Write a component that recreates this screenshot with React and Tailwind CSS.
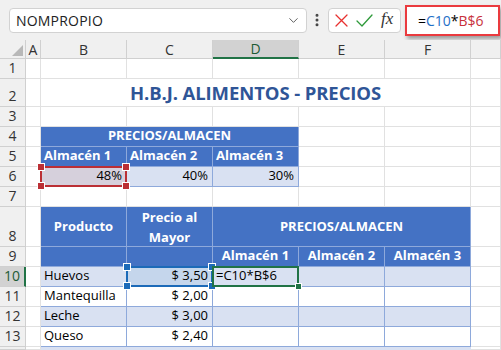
import { ChevronDown, EllipsisVertical } from 'lucide-react';

const COL = ['', 'col-start-1', 'col-start-2', 'col-start-3', 'col-start-4', 'col-start-5', 'col-start-6', 'col-start-7', 'col-start-8'];
const ROW = ['row-start-1', 'row-start-2', 'row-start-3', 'row-start-4', 'row-start-5', 'row-start-6', 'row-start-7', 'row-start-8', 'row-start-9', 'row-start-10', 'row-start-11', 'row-start-12', 'row-start-13', 'row-start-14', 'row-start-15'];
const SPAN = { 1: '', 3: 'col-span-3', 5: 'col-span-5' };

const BLUE = 'bg-[#4472c4] text-white font-bold border-r border-b border-[#8ea9db]';
const BAND = 'bg-[#d9e1f2] border-r border-b border-[#8ea9db]';
const PLAIN = 'bg-white border-r border-b border-[#8ea9db]';

const Cell = ({ r, c, span = 1, className = '', children }) => (
  <div className={`${ROW[r]} ${COL[c]} ${SPAN[span]} min-w-0 whitespace-nowrap ${className}`}>
    {children}
  </div>
);

const Handles = ({ color }) => (
  <>
    <span className={`absolute -left-[4px] -top-[4px] w-[6px] h-[6px] ${color} outline outline-1 outline-white`} />
    <span className={`absolute -right-[4px] -top-[4px] w-[6px] h-[6px] ${color} outline outline-1 outline-white`} />
    <span className={`absolute -left-[4px] -bottom-[4px] w-[6px] h-[6px] ${color} outline outline-1 outline-white`} />
    <span className={`absolute -right-[4px] -bottom-[4px] w-[6px] h-[6px] ${color} outline outline-1 outline-white`} />
  </>
);

const products = [
  ['Huevos', '3,50'],
  ['Mantequilla', '2,00'],
  ['Leche', '3,00'],
  ['Queso', '2,40'],
];

export default function App() {
  const letters = ['A', 'B', 'C', 'D', 'E', 'F', ''];
  const rows = [1, 2, 3, 4, 5, 6, 7, 8, 9, 10, 11, 12, 13, 14];

  return (
    <div className="w-[501px] h-[350px] overflow-hidden bg-white font-['Open_Sans',sans-serif] text-[13px] text-black">
      {/* formula bar */}
      <div className="h-10 bg-[#f0f0f0] flex items-center pl-[9px]">
        <div className="w-[298px] h-[25px] rounded-[4px] border border-[#d2d2d2] bg-white flex items-center justify-between pl-[6px] pr-[5px]">
          <span className="text-[14px] text-[#222] tracking-[0.2px]">NOMPROPIO</span>
          <ChevronDown className="w-[15px] h-[15px] text-[#555]" strokeWidth={1.5} />
        </div>
        <EllipsisVertical className="w-[16px] h-[16px] text-[#444] mx-[1px] ml-[2px]" strokeWidth={2.5} />
        <div className="ml-[2px] w-[73px] h-[25px] rounded-[4px] border border-[#d2d2d2] bg-white flex items-center pl-[6px] gap-[8px]">
          <svg width="13" height="13" viewBox="0 0 13 13" fill="none" stroke="#e8312f" strokeWidth="1.3" strokeLinecap="round">
            <path d="M1 1 L12 12 M12 1 L1 12" />
          </svg>
          <svg width="17" height="13" viewBox="0 0 17 13" fill="none" stroke="#2e9a3a" strokeWidth="1.3" strokeLinecap="round" strokeLinejoin="round">
            <path d="M1 7 L6 12 L16 1" />
          </svg>
          <span className="font-['Liberation_Serif',serif] italic text-[17px] text-[#333] -mt-[2px]">fx</span>
        </div>
        <div className="ml-[4px] w-[95px] h-[31px] border-2 border-[#ea3a3e] bg-white shadow-[2px_3px_4px_rgba(0,0,0,0.35)] flex items-center pl-[11px] text-[14px]">
          <span>=</span>
          <span className="text-[#1f6fc7]">C10</span>
          <span>*</span>
          <span className="text-[#c8313b]">B$6</span>
        </div>
      </div>

      {/* sheet */}
      <div className="grid grid-cols-[26px_15px_86px_86px_86px_86px_86px_30px] grid-rows-[19px_20px_28px_20px_20px_20px_20px_20px_40px_20px_20px_20px_20px_20px_3px]">
        {/* select-all corner */}
        <Cell r={0} c={1} className="bg-[#f0f0f0] border-r border-b border-[#d0d0d0] relative">
          <span className="absolute right-[2px] bottom-[2px] w-0 h-0 border-l-[11px] border-l-transparent border-b-[11px] border-b-[#b8b8b8]" />
        </Cell>
        {letters.map((l, i) => (
          <Cell
            key={'h' + i}
            r={0}
            c={i + 2}
            className={
              l === 'D'
                ? 'bg-[#d2d2d2] border-r border-[#d0d0d0] border-b-2 border-b-[#217346] flex items-center justify-center text-[14px] text-[#1d5b35]'
                : 'bg-[#f0f0f0] border-r border-b border-[#d0d0d0] flex items-center justify-center text-[14px] text-[#333]'
            }
          >
            {l}
          </Cell>
        ))}

        {rows.map((r) => (
          <Cell
            key={'rh' + r}
            r={r}
            c={1}
            className={
              r === 10
                ? 'bg-[#d2d2d2] border-b border-[#d0d0d0] border-r-2 border-r-[#217346] flex items-end justify-center pb-[1px] text-[14px] leading-[18px] text-[#1d5b35]'
                : 'bg-[#f0f0f0] border-r border-b border-[#d0d0d0] flex items-end justify-center pb-[1px] text-[14px] leading-[18px] text-[#333] overflow-hidden'
            }
          >
            {r === 14 ? '' : r}
          </Cell>
        ))}

        {/* gridlines */}
        {rows.map((r) =>
          [2, 3, 4, 5, 6, 7, 8].map((c) => (
            <Cell key={`g${r}-${c}`} r={r} c={c} className="border-r border-b border-[#e1e1e1]" />
          ))
        )}

        {/* title */}
        <Cell r={2} c={3} span={5} className="bg-white border-r border-b border-[#e1e1e1] flex items-center justify-center pt-[1px] text-[18.5px] font-bold text-[#2f5597] tracking-[-0.1px]">
          H.B.J. ALIMENTOS - PRECIOS
        </Cell>

        {/* table 1 */}
        <Cell r={4} c={3} span={3} className={`${BLUE} flex items-end justify-center pb-[1px]`}>
          PRECIOS/ALMACEN
        </Cell>
        {['Almacén 1', 'Almacén 2', 'Almacén 3'].map((t, i) => (
          <Cell key={'t5' + i} r={5} c={i + 3} className={`${BLUE} flex items-end pl-[3px] pb-[1px]`}>
            {t}
          </Cell>
        ))}
        <Cell r={6} c={3} className="bg-[#d6d0dc] border-r border-b border-[#8ea9db] relative flex items-end justify-end pr-[4px] pb-[1px]">
          48%
          <div className="absolute -inset-px border-2 border-[#bb2f35]">
            <Handles color="bg-[#bb2f35]" />
          </div>
        </Cell>
        <Cell r={6} c={4} className={`${BAND} flex items-end justify-end pr-[4px] pb-[1px]`}>40%</Cell>
        <Cell r={6} c={5} className={`${BAND} flex items-end justify-end pr-[4px] pb-[1px]`}>30%</Cell>

        {/* table 2 header */}
        <Cell r={8} c={3} className={`${BLUE} flex items-center justify-center`}>Producto</Cell>
        <Cell r={8} c={4} className={`${BLUE} flex items-center justify-center text-center leading-[20px] whitespace-normal`}>
          Precio al<br />Mayor
        </Cell>
        <Cell r={8} c={5} span={3} className={`${BLUE} flex items-center justify-center`}>PRECIOS/ALMACEN</Cell>
        <Cell r={9} c={3} className={BLUE} />
        <Cell r={9} c={4} className={BLUE} />
        {['Almacén 1', 'Almacén 2', 'Almacén 3'].map((t, i) => (
          <Cell key={'t9' + i} r={9} c={i + 5} className={`${BLUE} flex items-end justify-center pb-[1px]`}>
            {t}
          </Cell>
        ))}

        {/* table 2 body */}
        {products.map(([name, price], i) => {
          const r = 10 + i;
          const base = i % 2 === 0 ? BAND : PLAIN;
          return [
            <Cell key={'p' + r} r={r} c={3} className={`${base} flex items-end pl-[3px] pb-[1px]`}>{name}</Cell>,
            r === 10 ? (
              <Cell key={'pr' + r} r={r} c={4} className="bg-[#c5d6ec] border-r border-b border-[#8ea9db] relative flex items-end justify-end pr-[4px] pb-[1px]">
                $ {price}
                <div className="absolute -inset-px border-2 border-[#1c6ab8]">
                  <Handles color="bg-[#1c6ab8]" />
                </div>
              </Cell>
            ) : (
              <Cell key={'pr' + r} r={r} c={4} className={`${base} flex items-end justify-end pr-[4px] pb-[1px]`}>$ {price}</Cell>
            ),
            r === 10 ? (
              <Cell key={'d' + r} r={r} c={5} className={`${base} relative flex items-end pl-[3px] pb-[1px]`}>
                =C10*B$6
                <div className="absolute -inset-px border-2 border-[#217346]">
                  <span className="absolute -right-[4px] -bottom-[4px] w-[5px] h-[5px] bg-[#217346] outline outline-1 outline-white" />
                </div>
              </Cell>
            ) : (
              <Cell key={'d' + r} r={r} c={5} className={base} />
            ),
            <Cell key={'e' + r} r={r} c={6} className={base} />,
            <Cell key={'f' + r} r={r} c={7} className={base} />,
          ];
        })}
        {[3, 4, 5, 6, 7].map((c) => (
          <Cell key={'l' + c} r={14} c={c} className="bg-[#d9e1f2]" />
        ))}
      </div>
    </div>
  );
}
